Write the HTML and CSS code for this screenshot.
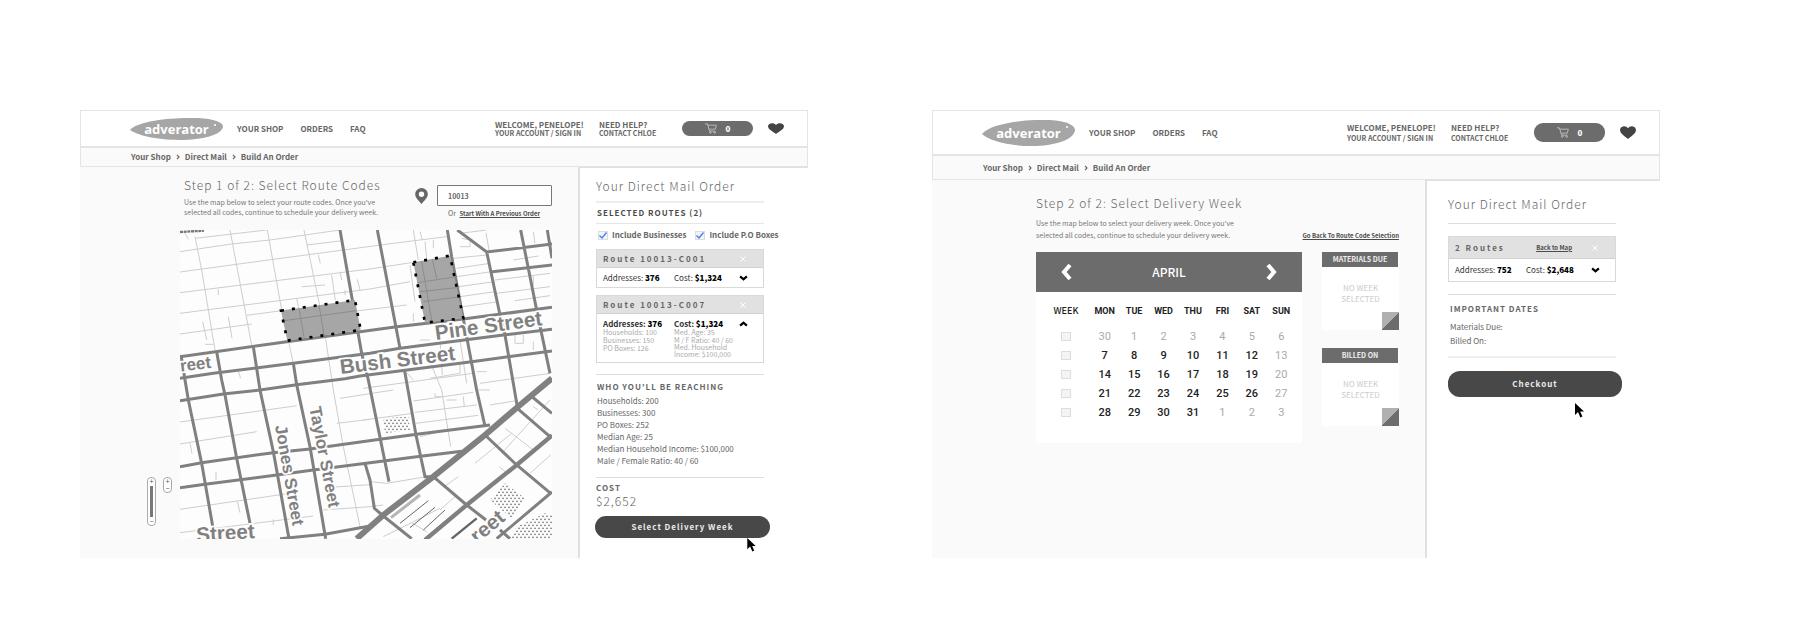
FILE: index.html
```
<!DOCTYPE html>
<html lang="en">
<head>
<meta charset="utf-8">
<title>Adverator – Direct Mail Order</title>
<link rel="stylesheet" href="styles.css">
</head>
<body>
<svg class="defs" width="0" height="0" aria-hidden="true">
  <symbol id="cart" viewBox="0 0 36 32"><g fill="none" stroke="currentColor" stroke-width="2.4"><path d="M0 2h7l7 22h17M9 6h25l-3 12H13"/><circle cx="16" cy="28" r="2.4"/><circle cx="29" cy="28" r="2.4"/></g></symbol>
  <symbol id="heart" viewBox="0 0 16 14" preserveAspectRatio="none"><path d="M8 14C5 11 0 8 0 4.200C0 0 6-1.500 8 2.500C10-1.500 16 0 16 4.200C16 8 11 11 8 14Z" fill="currentColor"/></symbol>
  <symbol id="blob" viewBox="0 0 93 26" preserveAspectRatio="none"><path d="M0 14C8 3 45-1 68 0C84 1 93 5 93 10C92 20 72 26 50 26C25 26 6 20 0 14Z" fill="#a6a6a6"/></symbol>
  <symbol id="cross" viewBox="0 0 6 6"><path d="M0.500 0.500l5 5M5.500 0.500l-5 5" stroke="#fff" fill="none"/></symbol>
  <symbol id="chev" viewBox="0 0 8 5"><path d="M1 1l3 2.600L7 1" stroke="currentColor" stroke-width="2" fill="none"/></symbol>
  <symbol id="next" viewBox="0 0 4 6"><path d="M1 0.800L3 3 1 5.200" stroke="currentColor" stroke-width="1.200" fill="none"/></symbol>
  <symbol id="pointer" viewBox="0 0 9 15"><path d="M0 0v12l3-3 2.400 5.500 2-1L5.200 8.500H9Z"/></symbol>
</svg>
<main class="page">

<section class="screen screen-map">
  <header class="top">
    <a class="logo" href="#"><svg aria-hidden="true"><use href="#blob"/></svg><span>adverator</span><i></i></a>
    <nav class="nav"><a href="#">YOUR SHOP</a><a href="#">ORDERS</a><a href="#">FAQ</a></nav>
    <div class="links"><span>WELCOME, PENELOPE!</span><a href="#">YOUR ACCOUNT / SIGN IN</a></div>
    <div class="links"><span>NEED HELP?</span><a href="#">CONTACT CHLOE</a></div>
    <button class="cart" aria-label="Cart"><svg><use href="#cart"/></svg><b>0</b></button>
    <button class="fav" aria-label="Favorites"><svg><use href="#heart"/></svg></button>
  </header>
  <nav class="crumbs"><a href="#">Your Shop</a><svg><use href="#next"/></svg><a href="#">Direct Mail</a><svg><use href="#next"/></svg><a href="#">Build An Order</a></nav>
  <div class="body">
    <div class="work">
      <div class="intro">
        <div>
          <h1>Step 1 of 2: Select Route Codes</h1>
          <p>Use the map below to select your route codes. Once you've<br>selected all codes, continue to schedule your delivery week.</p>
        </div>
        <div class="zip">
          <svg class="pin" viewBox="0 0 13 16" aria-hidden="true"><path fill="#666" fill-rule="evenodd" d="M6.500 0A6.300 6.300 0 0 0 .2 6.200C.2 10 4.500 13 6.500 16C8.500 13 12.800 10 12.800 6.200A6.300 6.300 0 0 0 6.500 0ZM6.500 3.500a2.700 2.700 0 1 1 0 5.400a2.700 2.700 0 0 1 0-5.400Z"/></svg>
          <div class="zip-box">
            <input type="text" value="10013" aria-label="ZIP code">
            <div class="or">Or <a href="#">Start With A Previous Order</a></div>
          </div>
        </div>
      </div>
      <div class="zoomers">
        <div class="slider"><button aria-label="Zoom in">+</button><span></span><button aria-label="Zoom out">−</button></div>
        <div class="steps"><button aria-label="Larger">+</button><button aria-label="Smaller">−</button></div>
      </div>
      <svg class="map" viewBox="0 0 1116 926" role="img" aria-label="Route map">
        <defs><pattern id="dots" width="12" height="18" patternUnits="userSpaceOnUse"><circle cx="3" cy="4" r="2.600" fill="#777"/><circle cx="9" cy="13" r="2.600" fill="#777"/></pattern></defs>
        <rect width="1116" height="926" fill="#fdfdfd"/>
        <g class="minor">
          <path d="M45 20L65 120 105 360M150 0L215 345M262 0L305 240 340 400M372 0L430 280 460 480 490 650 540 890"/>
          <path d="M0 65L155 42 270 30 480 0M45 25L260 0M0 126L280 88 640 40 800 20M0 188L570 117 700 97M0 250L570 177 690 155M0 312L215 282M200 256L350 236M310 270L570 238 680 225M380 45L480 33"/>
          <path d="M365 170L435 165M455 135L466 210M415 75L421 100M480 125L485 150M532 148L540 180M495 180V195M350 205L372 320M68 275L80 330M145 260L156 325M75 343H100M115 178V195M15 10L25 28M175 425L182 445"/>
          <path d="M0 576L345 528 350 527M480 505L640 480M0 642L230 605M470 580L570 568M0 838L330 790M0 908L400 858M450 772L570 764M430 840L570 830 610 825M108 725V750M172 815L180 848M280 868V885M30 640L36 670M550 570L700 550"/>
          <path d="M700 0L715 90M720 5L727 30M735 35L740 85M760 30V55M690 105L705 215M700 250V275M720 330H750M840 10L920 0M840 50H870V30L845 25M820 85L920 75M830 115L930 100M830 140L935 125M835 170L945 155M840 200L945 185M850 230L955 215"/>
          <path d="M918 8L927 60M1060 5L1065 40M1000 90L1075 78M945 150L1110 130M950 190L1110 170M1005 212L1110 197M1060 138V165M1005 315V340H1030V315M1060 335V360M780 330L787 435M840 330L860 460M750 445L840 430V400M680 428L700 450M890 425H920M740 370L785 480 812 650M900 460L1110 430M890 480H930"/>
          <path d="M550 475L880 430M700 513L880 487M705 547L890 525M708 580L895 556M930 525L1010 512M720 620L800 600M765 500H785M850 500L853 530M800 510H830M620 760L740 740M570 755L620 760M765 500V490"/>
          <path d="M1110 510L965 670M1075 540L1060 530M885 700L995 610 975 595M995 610L1060 660M1112 675L1050 730M958 710L975 725M792 770L835 740M780 840L825 800M610 920L695 878 740 905M695 878L780 835"/>
        </g>
        <path class="sliver" d="M0 6L72 2"/>
        <g class="major">
          <path d="M0 380L320 335 540 305 650 290 850 267 1116 232M0 445L100 430 340 400 570 370 660 355 970 315 1116 298M0 512L130 492 240 480 350 464 495 446 540 438 875 395 1116 363"/>
          <path d="M480 0L545 370 565 450 627 755M592 0L660 355M802 0L815 80 850 267 890 480 915 588M920 65L960 255 975 315 1012 530M1022 0L1070 240 1110 430M1102 0L1116 85M832 0L920 66 1116 42M937 125L1116 105"/>
          <path d="M110 365L125 450 135 495 170 685 210 880M3 375L15 450 25 510 65 700 100 900M220 350L240 480 280 665 327 926M340 400L350 464 390 650 437 926"/>
          <path d="M0 710L65 698 280 668 390 657 600 628 710 613 930 585M0 773L75 763 290 735 400 720 570 698 710 680 845 664M300 926L435 913 570 888M673 418L708 615 735 740H760M555 700L570 750 583 835 610 858 695 926"/>
          <path d="M1050 495L1116 550M1012 535L1110 620M915 615L1010 705 1112 790M760 740L860 825 918 870M1116 786L950 926M960 900L990 926"/>
        </g>
        <path class="avenue" d="M1116 445L1020 525 915 615 760 740 610 855 530 926"/>
        <path class="avenue second" d="M1116 616L1010 705 860 825 735 930"/>
        <path class="hatch" d="M660 880L745 812M690 893L765 832M730 900L795 840"/>
        <path class="hatch heavy" d="M815 926L890 865"/>
        <path class="bank" d="M633 863L720 795"/>
        <path fill="url(#dots)" d="M610 565L685 560 690 600 615 610ZM975 760L1035 805 995 865 930 810ZM1095 850L1116 855V926H990L1010 890Z"/>
        <path class="area" d="M303 242L525 210 542 300 322 332ZM700 97L810 77 850 265 735 278Z"/>
        <g class="lane"><path d="M312 272L530 242M357 235L372 322M417 225L432 315M712 158L830 140M720 185L838 172M730 215L842 200M757 88L770 145M725 95L755 270"/></g>
        <path class="edge" d="M303 242L525 210 542 300 322 332ZM700 97L810 77 850 265 735 278Z"/>
        <g class="names">
          <text transform="translate(768 330) rotate(-8)">Pine Street</text>
          <text transform="translate(482 432) rotate(-7)">Bush Street</text>
          <text transform="translate(2 425) rotate(-7)" class="small">reet</text>
          <text transform="translate(50 936) rotate(-4)">Street</text>
          <text transform="translate(892 942) rotate(-40)">reet</text>
          <text class="small" transform="translate(285 588) rotate(80)">Jones Street</text>
          <text class="small" transform="translate(388 533) rotate(79)">Taylor Street</text>
        </g>
      </svg>
    </div>
    <aside class="order">
      <h2>Your Direct Mail Order</h2>
      <h3 class="ruled">SELECTED ROUTES (2)</h3>
      <div class="filters">
        <label><input type="checkbox" checked>Include Businesses</label>
        <label><input type="checkbox" checked>Include P.O Boxes</label>
      </div>
      <article class="route">
        <h4>Route 10013-C001<button aria-label="Remove route"><svg><use href="#cross"/></svg></button></h4>
        <div class="facts"><span>Addresses: <b>376</b></span><span>Cost: <b>$1,324</b></span><button aria-label="Expand"><svg><use href="#chev"/></svg></button></div>
      </article>
      <article class="route open">
        <h4>Route 10013-C007<button aria-label="Remove route"><svg><use href="#cross"/></svg></button></h4>
        <div class="facts"><span>Addresses: <b>376</b></span><span>Cost: <b>$1,324</b></span><button aria-label="Collapse"><svg><use href="#chev"/></svg></button></div>
        <div class="more">
          <ul><li>Households: 100</li><li>Businesses: 150</li><li>PO Boxes: 126</li></ul>
          <ul><li>Med. Age: 35</li><li>M / F Ratio: 40 / 60</li><li class="tight">Med. Household<br>Income: $100,000</li></ul>
        </div>
      </article>
      <div class="reach">
        <h3>WHO YOU'LL BE REACHING</h3>
        <ul><li>Households: 200</li><li>Businesses: 300</li><li>PO Boxes: 252</li><li>Median Age: 25</li><li>Median Household Income: $100,000</li><li>Male / Female Ratio: 40 / 60</li></ul>
      </div>
      <div class="cost"><h3>COST</h3><p>$2,652</p></div>
      <div class="action"><button class="primary">Select Delivery Week</button><svg class="pointer" aria-hidden="true"><use href="#pointer"/></svg></div>
    </aside>
  </div>
</section>

<section class="screen screen-week">
  <header class="top">
    <a class="logo" href="#"><svg aria-hidden="true"><use href="#blob"/></svg><span>adverator</span><i></i></a>
    <nav class="nav"><a href="#">YOUR SHOP</a><a href="#">ORDERS</a><a href="#">FAQ</a></nav>
    <div class="links"><span>WELCOME, PENELOPE!</span><a href="#">YOUR ACCOUNT / SIGN IN</a></div>
    <div class="links"><span>NEED HELP?</span><a href="#">CONTACT CHLOE</a></div>
    <button class="cart" aria-label="Cart"><svg><use href="#cart"/></svg><b>0</b></button>
    <button class="fav" aria-label="Favorites"><svg><use href="#heart"/></svg></button>
  </header>
  <nav class="crumbs"><a href="#">Your Shop</a><svg><use href="#next"/></svg><a href="#">Direct Mail</a><svg><use href="#next"/></svg><a href="#">Build An Order</a></nav>
  <div class="body">
    <div class="work">
      <div class="intro">
        <div>
          <h1>Step 2 of 2: Select Delivery Week</h1>
          <p>Use the map below to select your delivery week. Once you've<br>selected all codes, continue to schedule your delivery week.</p>
        </div>
        <a class="back" href="#">Go Back To Route Code Selection</a>
      </div>
      <div class="schedule">
        <div class="calendar">
          <div class="month">
            <button aria-label="Previous month"><svg viewBox="0 0 11 18"><path d="M9 2L3 9l6 7"/></svg></button>
            <span>APRIL</span>
            <button aria-label="Next month"><svg viewBox="0 0 11 18"><path d="M2 2l6 7-6 7"/></svg></button>
          </div>
          <div class="weeks">
          <table>
            <thead><tr><th class="wk">WEEK</th><th>MON</th><th>TUE</th><th>WED</th><th>THU</th><th>FRI</th><th>SAT</th><th>SUN</th></tr></thead>
            <tbody>
              <tr><td class="wk"><input type="checkbox" aria-label="Week 1"></td><td class="off">30</td><td class="off">1</td><td class="off">2</td><td class="off">3</td><td class="off">4</td><td class="off">5</td><td class="off">6</td></tr>
              <tr><td class="wk"><input type="checkbox" aria-label="Week 2"></td><td>7</td><td>8</td><td>9</td><td>10</td><td>11</td><td>12</td><td class="off">13</td></tr>
              <tr><td class="wk"><input type="checkbox" aria-label="Week 3"></td><td>14</td><td>15</td><td>16</td><td>17</td><td>18</td><td>19</td><td class="off">20</td></tr>
              <tr><td class="wk"><input type="checkbox" aria-label="Week 4"></td><td>21</td><td>22</td><td>23</td><td>24</td><td>25</td><td>26</td><td class="off">27</td></tr>
              <tr><td class="wk"><input type="checkbox" aria-label="Week 5"></td><td>28</td><td>29</td><td>30</td><td>31</td><td class="off">1</td><td class="off">2</td><td class="off">3</td></tr>
            </tbody>
          </table>
          </div>
        </div>
        <div class="dues">
          <div class="due"><h3>MATERIALS DUE</h3><p>NO WEEK<br>SELECTED</p><i></i></div>
          <div class="due"><h3>BILLED ON</h3><p>NO WEEK<br>SELECTED</p><i></i></div>
        </div>
      </div>
    </div>
    <aside class="order">
      <h2>Your Direct Mail Order</h2>
      <article class="route">
        <h4>2 Routes<a href="#">Back to Map</a><button aria-label="Remove routes"><svg><use href="#cross"/></svg></button></h4>
        <div class="facts"><span>Addresses: <b>752</b></span><span>Cost: <b>$2,648</b></span><button aria-label="Expand"><svg><use href="#chev"/></svg></button></div>
      </article>
      <div class="dates">
        <h3>IMPORTANT DATES</h3>
        <ul><li>Materials Due:</li><li>Billed On:</li></ul>
      </div>
      <div class="action"><button class="primary">Checkout</button><svg class="pointer" aria-hidden="true"><use href="#pointer"/></svg></div>
    </aside>
  </div>
</section>
</main>
</body>
</html>
```
FILE: styles.css
```
* { box-sizing: border-box; margin: 0; padding: 0; }
body { background: #fff; color: #666; font: 8px/10px "Noto Sans CJK SC", "Open Sans", sans-serif; }
button { border: 0; background: none; font: inherit; color: inherit; display: flex; align-items: center; justify-content: center; cursor: pointer; }
a { color: inherit; text-decoration: none; }
ul { list-style: none; }
svg { display: block; }
.defs { position: absolute; }

.page { display: grid; grid-template-columns: 1fr 1fr; gap: 124px; padding: 110px 140px 24px 80px; }
.screen { display: flex; flex-direction: column; background: #fafafa; min-width: 0; }

.top { display: flex; align-items: center; height: 38px; padding: 0 23px 0 49px; background: #fff; border: 1px solid #e4e4e4; border-bottom: 2px solid #e4e4e4; font-weight: 700; white-space: nowrap; }
.logo { position: relative; width: 93px; height: 22px; margin-right: 14px; display: flex; align-items: center; justify-content: center; color: #fff; font: 700 13px/18px "Open Sans", sans-serif; }
.logo svg { position: absolute; inset: 0; width: 100%; height: 100%; }
.logo span { position: relative; }
.logo i { position: absolute; right: 7px; top: 6px; width: 2px; height: 2px; border-radius: 50%; background: #fff; }
.nav { display: flex; gap: 17px; margin-right: auto; }
.links { display: flex; flex-direction: column; width: 104px; line-height: 8px; }
.links + .links { width: 83px; }
.links a { font-size: 7px; }
.cart { width: 71px; height: 15px; gap: 9px; border-radius: 9px; background: #6c6c6c; color: #fff; font-weight: 900; }
.cart svg { width: 12px; height: 11px; color: #ccc; }
.fav { margin-left: 15px; color: #444; }
.fav svg { width: 16px; height: 11px; }

.crumbs { display: flex; align-items: center; gap: 5px; height: 19px; padding-left: 50px; border: 1px solid #e4e4e4; border-top: 0; font-weight: 700; }
.crumbs svg { width: 4px; height: 6px; }

.body { flex: 1; display: grid; grid-template-columns: 1fr 230px; }
.work { display: grid; grid-template-columns: 100px 1fr; align-content: start; padding-right: 26px; }
.intro { grid-column: 2; display: flex; justify-content: space-between; height: 63px; padding: 8px 0 0 4px; white-space: nowrap; }
h1, h2 { font-weight: 300; font-size: 12px; line-height: 20px; letter-spacing: 1px; color: #666; }
.intro p { margin-top: 2px; font-size: 7px; color: #777; }
.zip { display: flex; gap: 9px; padding-top: 10px; }
.pin { width: 13px; height: 16px; margin-top: 3px; }
.zip-box { width: 115px; }
.zip input { width: 100%; height: 21px; padding-left: 10px; border: 1px solid #777; border-radius: 1px; background: #fff; color: #666; font: 700 7px/10px "Noto Sans CJK SC", sans-serif; }
.or { padding: 2px 0 0 11px; font-size: 7px; }
.or a, .back, h4 a { font-size: 6px; font-weight: 700; color: #4b4b4b; text-decoration: underline; letter-spacing: 0; }
.or a { margin-left: 2px; }

.zoomers { display: flex; align-items: flex-start; align-self: end; gap: 7px; height: 62px; padding-left: 67px; }
.zoomers div { display: flex; flex-direction: column; align-items: center; width: 9px; border: 1px solid #aaa; border-radius: 4px; background: #fff; color: #555; font: 7px/7px "Liberation Sans", sans-serif; }
.zoomers button { width: 7px; height: 7px; }
.slider { height: 49px; justify-content: space-between; }
.slider span { flex: 1; width: 3px; margin: 1px 0; background: #777; }

.map { width: 100%; height: auto; }
.map path { fill: none; }
.minor path { stroke: #cdcdcd; stroke-width: 3; }
.map .sliver { stroke: #777; stroke-width: 7; stroke-dasharray: 9 2; }
.major path { stroke: #808080; stroke-width: 9; }
.map .avenue { stroke: #808080; stroke-width: 18; }
.map .second { stroke-width: 13; }
.map .hatch { stroke: #666; stroke-width: 3; }
.map .heavy { stroke-width: 7; }
.map .bank { stroke: #b5b5b5; stroke-width: 9; }
.map .area { fill: #a6a6a6; }
.lane path { stroke: #8c8c8c; stroke-width: 3; }
.map .edge { stroke: #000; stroke-width: 8; stroke-dasharray: 9 24; }
.map [fill^="url"] { fill: url(#dots); }
.names text { font: 700 62px "Liberation Sans", Arial, sans-serif; fill: #808080; stroke: #fdfdfd; stroke-width: 10; paint-order: stroke; }
.names .small { font-size: 51px; }

.order { padding: 8px 44px 20px 16px; background: #fff; border-left: 2px solid #e0e0e0; border-top: 1px solid #e0e0e0; white-space: nowrap; }
h3 { font-size: 8px; line-height: 10px; font-weight: 700; letter-spacing: 1px; }
.ruled { margin-top: 5px; padding: 5px 0 5px 1px; border-top: 2px solid #eee; border-bottom: 1px solid #e6e6e6; color: #4b4b4b; }
.filters { display: flex; gap: 9px; padding: 6px 0 9px 2px; font-weight: 700; }
.filters label { display: flex; align-items: center; gap: 4px; }
input[type="checkbox"] { appearance: none; width: 10px; height: 9px; border: 1px solid #ddd; background: #f4f4f4; }
input[type="checkbox"]:checked { background: #f4f4f4 url("data:image/svg+xml,%3Csvg xmlns='http://www.w3.org/2000/svg' viewBox='0 0 8 7'%3E%3Cpath d='M.5 3.500L3 6L7.500 .5' fill='none' stroke='%233b82f6' stroke-width='1.300'/%3E%3C/svg%3E") center / 100% 100% no-repeat; }

.route { border: 1px solid #d9d9d9; background: #fff; margin-bottom: 7px; }
h4 { display: flex; align-items: center; justify-content: space-between; height: 18px; padding: 0 17px 0 6px; background: #e1e1e1; border-bottom: 1px solid #d0d0d0; font-size: 8px; letter-spacing: 2px; }
h4 a { margin: 0 20px 0 auto; }
h4 svg { width: 6px; height: 6px; }
.facts { display: grid; grid-template-columns: 71px 1fr auto; align-items: center; height: 19px; padding: 0 15px 0 6px; color: #333; }
.facts b { font-weight: 900; color: #000; }
.facts button { color: #000; }
.facts svg { width: 9px; height: 6px; }
.open .facts { font-weight: 700; }
.open .facts svg { transform: rotate(180deg); }
.more { display: grid; grid-template-columns: 71px 1fr; padding: 0 0 4px 6px; margin-top: -5px; font-size: 7px; line-height: 8px; color: #aaa; }
.more .tight { line-height: 7px; }

.reach { margin-top: 11px; padding: 7px 0 10px 1px; border-top: 1px solid #ddd; border-bottom: 1px solid #ddd; }
.reach ul { margin-top: 3px; }
.reach li { line-height: 12px; }
.cost { padding-top: 5px; }
.cost p { font-size: 12px; font-weight: 300; line-height: 16px; letter-spacing: 1px; }
.action { position: relative; margin: 7px -6px 0 -1px; }
.primary { width: 100%; height: 22px; border-radius: 11px; background: #484848; color: #eee; font-weight: 700; letter-spacing: 1px; }
.pointer { position: absolute; right: 14px; top: 100%; width: 9px; height: 14px; }

.screen-week .top { height: 46px; }
.screen-week .logo { height: 26px; }
.screen-week .links { line-height: 10px; }
.screen-week .cart { height: 19px; }
.screen-week .fav svg { height: 13px; }
.screen-week .crumbs { height: 24px; }
.screen-week .body { grid-template-columns: 1fr 235px; }
.screen-week .work { display: block; padding: 0 26px 0 104px; }
.screen-week .intro { height: 72px; padding: 13px 0 0; align-items: flex-start; }
.screen-week .intro p { line-height: 12px; margin-top: 4px; }
.back { align-self: flex-end; margin-bottom: 11px; }
.schedule { display: grid; grid-template-columns: 1fr 77px; gap: 20px; }
.calendar { background: #fff; }
.month { display: flex; align-items: center; justify-content: space-between; height: 40px; padding: 0 25px; background: #6c6c6c; color: #fff; font-size: 12px; font-weight: 500; }
.month svg { width: 11px; height: 18px; fill: none; stroke: #fff; stroke-width: 4; }
.weeks { padding: 0 6px 21px 0; }
table { width: 100%; border-collapse: collapse; table-layout: fixed; text-align: center; font: 500 11px/18px Roboto, sans-serif; color: #222; }
th { height: 35px; padding-top: 2px; font-size: 9px; font-weight: 700; }
.wk { width: 54px; padding-left: 6px; }
th.wk { font: 500 9px/18px "Noto Sans CJK SC", sans-serif; }
td { height: 19px; }
td input { display: block; margin: 0 auto; }
.off { color: #aaa; font-weight: 400; }
.dues { display: flex; flex-direction: column; gap: 18px; }
.due { position: relative; height: 78px; background: #fff; text-align: center; }
.due h3 { height: 15px; line-height: 15px; margin-right: 1px; background: #6c6c6c; color: #eee; font-size: 7px; letter-spacing: 0; }
.due p { padding-top: 15px; line-height: 11px; color: #ccc; }
.due i { position: absolute; right: 0; bottom: 0; width: 17px; height: 18px; background: linear-gradient(135deg, #b0b0b0 50%, #6c6c6c 50%); }
.screen-week .order { padding: 13px 44px 20px 21px; }
.screen-week h2 { padding-bottom: 9px; border-bottom: 1px solid #ddd; }
.screen-week .route { margin: 12px 0; }
.screen-week h4 { height: 22px; }
.screen-week .facts { height: 22px; }
.dates { padding: 9px 0 8px 2px; border-top: 1px solid #ddd; border-bottom: 2px solid #eee; }
.dates ul { margin-top: 6px; }
.dates li { line-height: 14px; }
.screen-week .action { margin: 13px -6px 0 0; }
.screen-week .primary { height: 26px; border-radius: 12px; }
.screen-week .pointer { top: 32px; right: 38px; height: 15px; }
```
